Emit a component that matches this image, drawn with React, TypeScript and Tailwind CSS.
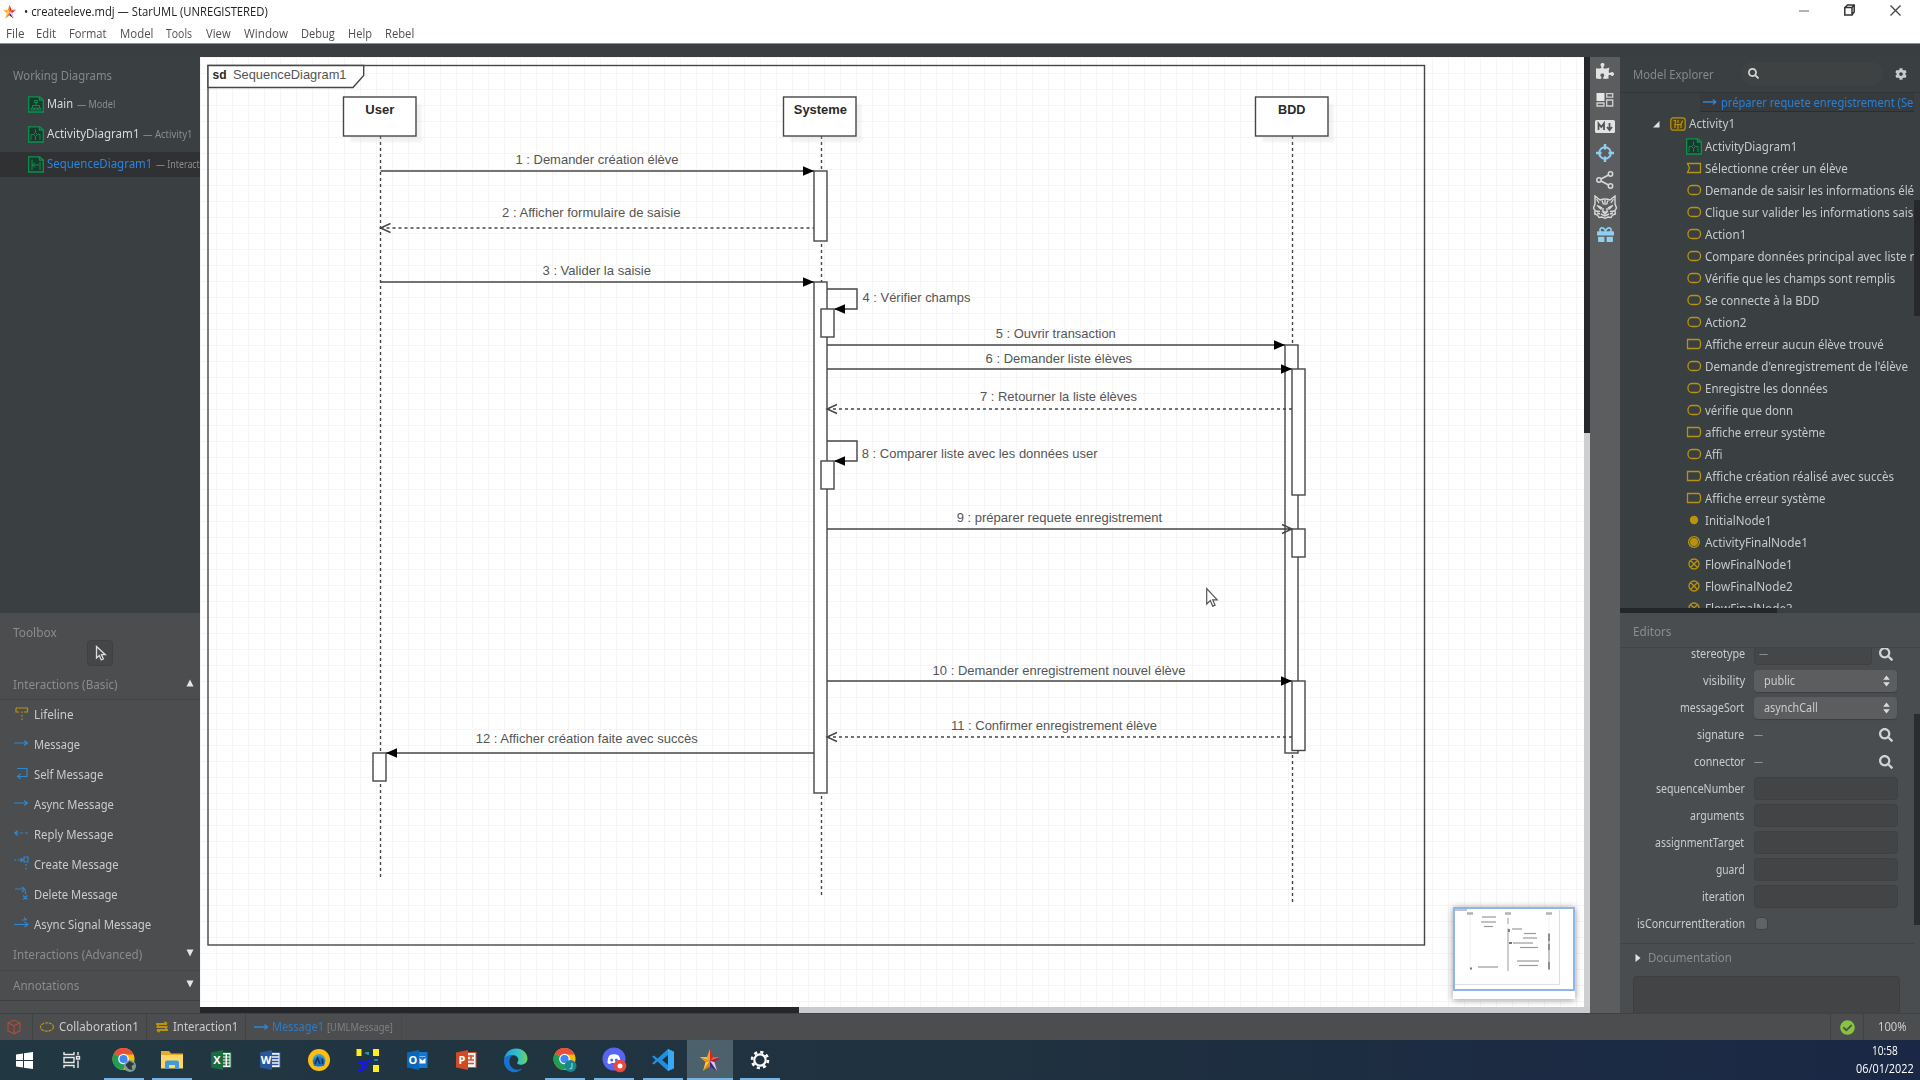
import { useLayoutEffect, useRef } from "react";
import type { ReactNode } from "react";
import { FaPuzzlePiece, FaGift, FaCog, FaSearch, FaCheckCircle } from "react-icons/fa";

/** Single-line label squeezed or stretched to a fixed width. */
function Fit({ w, children, className = "" }: { w: number; children: string; className?: string }) {
  const box = useRef<HTMLSpanElement>(null);
  const inner = useRef<HTMLSpanElement>(null);
  useLayoutEffect(() => {
    if (!box.current || !inner.current) return;
    box.current.style.width = `${w}px`;
    inner.current.style.transform = `scaleX(${w / inner.current.offsetWidth})`;
  }, [w, children]);
  return (
    <span ref={box} className={`inline-block shrink-0 whitespace-pre ${className}`}>
      <span ref={inner} className="inline-block origin-left whitespace-pre">
        {children}
      </span>
    </span>
  );
}

const GREEN = "#0d9150";
const GOLD = "#b8930f";
const BLUE = "#2f87cf";

function DocIcon({ kind }: { kind: number }) {
  return (
    <svg width="16" height="17" viewBox="0 0 16 17" fill="none" stroke={GREEN} strokeWidth="1.3" className="shrink-0">
      <path d="M.7.9h11L15.3 4v12H.7z" fill="#173a2d" />
      <path d="M11.5 1v3.2h3.6" />
      {kind === 0 && <path d="M8 6.500v3M4.500 12V9.500h7V12M3 12h3v2H3zM6.500 12h3v2h-3zM10 12h3v2h-3zM6.500 4.500h3v2h-3z" strokeWidth="0.9" />}
      {kind === 1 && <path d="M7.500 3.500v3M7.500 10.500v3.500M5.500 8.500l2-2 2 2-2 2zM3 14V8.500h2.500M9.500 8.500H12V14" strokeWidth="0.9" />}
      {kind === 2 && <path d="M4 3.500v10.500M12 6v8M4 9h7M7 6.500L4.500 9 7 11.500" strokeWidth="1" />}
    </svg>
  );
}

const MENUS: [string, number, number][] = [
  ["File", 6, 18.5],
  ["Edit", 11.8, 19.7],
  ["Format", 13.4, 37.1],
  ["Model", 13.1, 33.4],
  ["Tools", 13.5, 26.2],
  ["View", 13.8, 24.5],
  ["Window", 13, 43.8],
  ["Debug", 13, 34.2],
  ["Help", 13, 24],
  ["Rebel", 13.3, 29],
];

function StarLogo({ size }: { size: number }) {
  return (
    <svg width={size} height={size} viewBox="0 0 24 24" className="shrink-0">
      <path d="M12 1 9 9l3 4z" fill="#f2a51e" />
      <path d="M12 1l3.200 8L12 13z" fill="#d9261c" />
      <path d="M1.500 9 9 9l3 4z" fill="#fbc02d" />
      <path d="M22.500 9H15.200L12 13z" fill="#ee5a4a" />
      <path d="M1.500 9l6 5L12 13z" fill="#f7931e" />
      <path d="M22.500 9l-6 5L12 13z" fill="#b3163a" />
      <path d="M5 23l2.500-9L12 13z" fill="#ffc933" />
      <path d="M5 23l7-4.500V13z" fill="#e5841b" />
      <path d="M19 23l-7-4.500V13z" fill="#4a1f8f" />
      <path d="M19 23l-2.500-9L12 13z" fill="#d8c7ee" />
    </svg>
  );
}

function TitleBar() {
  return (
    <header className="flex h-[43px] shrink-0 flex-col bg-white font-['Open_Sans',sans-serif] text-[12px]">
      <div className="flex h-[23px] items-center pl-[2px] text-[#222]">
        <StarLogo size={15} />
        <Fit w={244} className="ml-[7px] mt-px">• createeleve.mdj — StarUML (UNREGISTERED)</Fit>
        <div className="ml-auto flex items-center gap-[35px] pb-[3px] pr-[19px]">
          <svg width="10" height="12" viewBox="0 0 10 12"><path d="M0 7h10" stroke="#aaa" strokeWidth="1.8" /></svg>
          <svg width="11" height="12" viewBox="0 0 11 12" fill="none" stroke="#333" strokeWidth="1.5"><path d="M.8 3.500h7.200V11H.8zM1.500 3L3.500 1h6.700v7l-2 2.500M8 3.500L10.200 1" /></svg>
          <svg width="11" height="12" viewBox="0 0 11 12"><path d="M.5 1.500l10 10M10.500 1.500l-10 10" stroke="#444" strokeWidth="1.3" /></svg>
        </div>
      </div>
      <nav className="flex h-5 items-center pt-px text-[#505050]">
        {MENUS.map(([label, gap, w]) => (
          <div key={label} className="flex items-center">
            <Gap n={gap} />
            <Fit w={w}>{label}</Fit>
          </div>
        ))}
      </nav>
    </header>
  );
}

function Gap({ n }: { n: number }) {
  return <span className="block shrink-0" style={{ width: n }} />;
}

function WorkingDiagrams() {
  const rows: [string, number, string, number][] = [
    ["Main", 26, "— Model", 38],
    ["ActivityDiagram1", 92.5, "— Activity1", 49.5],
    ["SequenceDiagram1", 105, "— Interact", 44],
  ];
  return (
    <section className="h-[556px] overflow-hidden bg-[#3a3f41]">
      <div className="h-8 pl-[13px] pt-[11px] leading-4 text-[#85898a]"><Fit w={99}>Working Diagrams</Fit></div>
      {rows.map(([name, w, owner, ow], i) => (
        <div key={name} className="flex h-[30px] items-center">
          <div className={`flex h-[25px] w-full items-center pl-7 ${i === 2 ? "bg-[#2f3133]" : ""}`}>
            <DocIcon kind={i} />
            <Fit w={w} className={`ml-[2.5px] ${i === 2 ? "text-[#2b85e0]" : "text-[#d8dada]"}`}>{name}</Fit>
            <Fit w={ow} className="ml-1 text-[11.5px] text-[#8a8e8f]">{owner}</Fit>
          </div>
        </div>
      ))}
    </section>
  );
}

const TOOL_ICONS: ReactNode[] = [
  <g stroke={GOLD} key="0"><path d="M2 2h11.500v4H10M2 2v4h3M8 5.500v1.500M8 9v1.500M8 12.500V14" /></g>,
  <path key="1" d="M0 7h13M10 4.500L13.500 7 10 9.500" />,
  <path key="2" d="M3 2.500h10v8H4M6.500 8L3.500 10.500 6.500 13" />,
  <path key="3" d="M0 7h13M10 4.500L13.500 7 10 9.500" />,
  <path key="4" d="M1 7h3.500M6 7h3M11 7h3M4 4.500L.8 7 4 9.500" />,
  <path key="5" d="M0 4h2M3.500 4h5M6.500 2L9 4 6.500 6M10 1h4v5h-4zM12 8v2M12 11.500v2" />,
  <path key="6" d="M1 3h9M8 1l3 2.500L8 6M11.500 5v3.500M9 9.500l4.500 4M13.500 9.500L9 13.500" />,
  <path key="7" d="M0 8.500h14M10.500 6L14 8.500 10.500 11M8 4h4M10 1.500L12.500 4" />,
];

const TOOLS: [string, number][] = [
  ["Lifeline", 40],
  ["Message", 46],
  ["Self Message", 69.5],
  ["Async Message", 80],
  ["Reply Message", 79.5],
  ["Create Message", 84.5],
  ["Delete Message", 84],
  ["Async Signal Message", 117],
];

function Toolbox() {
  return (
    <section className="flex-1 overflow-hidden bg-[#4b4d4f] text-[#8a8c8d]">
      <div className="h-[27px] pl-[13px] pt-[12px] leading-4"><Fit w={43.5}>Toolbox</Fit></div>
      <div className="ml-[87px] flex h-[26px] w-[26px] items-center justify-center rounded-sm border border-[#3f4041] bg-[#454647] pl-[2px]">
        <svg width="12" height="17" viewBox="0 0 12 17"><path d="M1.500 1.500v11.500l2.800-2.500 1.900 4.500 2.200-1-1.900-4.300h3.800z" fill="#4b4d4f" stroke="#dcdcdc" strokeWidth="1.3" /></svg>
      </div>
      <div className="flex h-[34px] items-center justify-between border-b border-[#404243] pl-[13px] pr-[6px] pt-1">
        <Fit w={104.5}>Interactions (Basic)</Fit>
        <svg width="8" height="8" viewBox="0 0 8 8" className="mb-1"><path d="M4 0.500l3.500 7h-7z" fill="#e6e6e6" /></svg>
      </div>
      {TOOLS.map(([name, w], i) => (
        <div key={name} className="flex h-[30px] items-center pl-[14px]">
          <svg width="15" height="15" viewBox="0 0 15 15" fill="none" stroke={BLUE} strokeWidth="1.2" className="mb-1 shrink-0">{TOOL_ICONS[i]}</svg>
          <Fit w={w} className="ml-[5px] text-[#c9cbcb]">{name}</Fit>
        </div>
      ))}
      <div className="flex h-[31px] items-center justify-between border-b border-[#444647] pl-[13px] pr-[6px]">
        <Fit w={129}>Interactions (Advanced)</Fit>
        <svg width="8" height="8" viewBox="0 0 8 8" className="mb-1"><path d="M4 7.500l3.500-7h-7z" fill="#e6e6e6" /></svg>
      </div>
      <div className="flex h-[30px] items-center justify-between border-b border-[#3d3f40] pl-[13px] pr-[6px]">
        <Fit w={66.5}>Annotations</Fit>
        <svg width="8" height="8" viewBox="0 0 8 8" className="mb-1"><path d="M4 7.500l3.500-7h-7z" fill="#e6e6e6" /></svg>
      </div>
    </section>
  );
}

/* label, left, width, baseline */
const LABELS: [string, number, number, number][] = [
  ["1 : Demander création élève", 515.5, 163, 164],
  ["2 : Afficher formulaire de saisie", 502, 178.5, 217],
  ["3 : Valider la saisie", 542.5, 108.5, 275],
  ["4 : Vérifier champs", 862.5, 108, 301.5],
  ["5 : Ouvrir transaction", 995.8, 120, 338.3],
  ["6 : Demander liste élèves", 985.6, 146.5, 362.5],
  ["7 : Retourner la liste élèves", 980, 157, 401.4],
  ["8 : Comparer liste avec les données user", 861.8, 235.7, 458.2],
  ["9 : préparer requete enregistrement", 956.7, 205.5, 522.4],
  ["10 : Demander enregistrement nouvel élève", 932.6, 253, 674.5],
  ["11 : Confirmer enregistrement élève", 951, 206, 729.7],
  ["12 : Afficher création faite avec succès", 475.7, 222, 742.5],
];

const HEADS: [string, number, number, number][] = [
  ["User", 343.5, 365.3, 29],
  ["Systeme", 783.5, 793.8, 53.2],
  ["BDD", 1255.5, 1278, 27.5],
];

const BARS: [number, number, number, number][] = [
  [814, 171, 13, 70],
  [814, 282, 13, 511],
  [821, 309, 13, 28],
  [821, 461, 13, 28],
  [1285, 345, 13, 408],
  [1292, 369, 13, 126],
  [1292, 529, 13, 28],
  [1292, 681, 13, 69.5],
  [373, 753, 13, 28],
];

const SOLID: [number, number, number][] = [
  [380.5, 814, 171],
  [380.5, 814, 282],
  [827, 1285, 345],
  [827, 1292, 369],
  [827, 1292, 681],
  [814, 386, 753],
];

const DASHED: [number, number, number][] = [
  [814, 380.5, 228],
  [1292, 827, 409],
  [1292, 827, 737],
];

function Diagram() {
  return (
    <svg width="1384" height="950" viewBox="200 57 1384 950" className="block bg-white">
      <defs>
        <pattern id="grid" x="8" y="9" width="16" height="16" patternUnits="userSpaceOnUse">
          <path d="M.5 0v16M0 .5h16" stroke="#f5f5f6" strokeWidth="1" />
        </pattern>
        <filter id="soft"><feGaussianBlur stdDeviation="1" /></filter>
      </defs>
      <rect x="200" y="57" width="1384" height="950" fill="url(#grid)" />
      <g fill="none" stroke="#464646" strokeWidth="1.4">
        <rect x="208" y="65.5" width="1216.500" height="879.5" />
        <path d="M208 87.500H353l10.700-12V65.500H208z" fill="#fff" />
        <path d="M380.500 136V753M380.500 784V878M821.500 136V171M821.500 244V282M821.500 796V896M1292.500 136V345M1292.500 755V902" strokeDasharray="3 3" />
        {HEADS.map(([n, x]) => (
          <g key={n}>
            <rect x={x + 7} y="104" width="71" height="38" fill="#c8c8cc" opacity="0.22" stroke="none" filter="url(#soft)" />
            <rect x={x} y="97" width="72.5" height="39" fill="#fff" />
          </g>
        ))}
        {BARS.map(([x, y, w, h]) => <rect key={`${x}-${y}`} x={x} y={y} width={w} height={h} fill="#fff" />)}
        {SOLID.map(([a, b, y]) => {
          const s = b > a ? -1 : 1;
          return (
            <g key={y}>
              <path d={`M${a} ${y}H${b}`} />
              <path d={`M${b} ${y}l${11 * s} -4.700v9.400z`} fill="#000" stroke="none" />
            </g>
          );
        })}
        {DASHED.map(([a, b, y]) => (
          <g key={y}>
            <path d={`M${b} ${y}H${a}`} strokeDasharray="3 3" />
            <path d={`M${b + 10} ${y - 4.5}L${b} ${y}l10 4.500`} />
          </g>
        ))}
        <path d="M827 529H1292M1282 524.500l10 4.500-10 4.500" />
        {[289, 441].map((y) => (
          <g key={y}>
            <path d={`M827 ${y}H857V${y + 20}H835`} />
            <path d={`M834 ${y + 20}l11 -4.700v9.400z`} fill="#000" stroke="none" />
          </g>
        ))}
      </g>
      <g fontFamily="'Liberation Sans', sans-serif" fontSize="13" fill="#555">
        {LABELS.map(([t, x, w, y]) => (
          <text key={t} x={x} y={y} textLength={w} lengthAdjust="spacingAndGlyphs">{t}</text>
        ))}
        <text x="233" y="79" textLength="113.5" lengthAdjust="spacingAndGlyphs">SequenceDiagram1</text>
        <g fontWeight="700" fill="#2a2a2a">
          <text x="212.6" y="79" textLength="14" lengthAdjust="spacingAndGlyphs">sd</text>
          {HEADS.map(([t, , x, w]) => (
            <text key={t} x={x} y="113.8" textLength={w} lengthAdjust="spacingAndGlyphs">{t}</text>
          ))}
        </g>
      </g>
      <path d="M1206.700 588.500v15.500l3.600-3.400 2.400 5.500 2.400-1-2.400-5.300h4.500z" fill="#fff" stroke="#555" strokeWidth="1.2" />
    </svg>
  );
}

function Minimap() {
  const marks: [number, number, number][] = [
    [27, 8, 14], [26, 13, 15], [29, 17.5, 9], [57, 20, 10], [69, 24.5, 12],
    [68, 29, 14], [58, 34, 20], [65, 38.5, 18], [62, 52, 22], [64, 56.5, 19], [23, 58, 20],
  ];
  return (
    <div className="absolute left-[1253px] top-[850px] h-[92px] w-[122px] bg-white shadow-[0_1px_7px_rgba(0,0,0,0.4)]">
      <div className="h-[84px] border-2 border-[#8fb5ef]">
        <svg width="118" height="80" viewBox="0 0 118 80" fill="none">
          <path d="M0 75.500H104.500V1" stroke="#ddd" />
          <path d="M0 1H12" stroke="#888" />
          <path d="M15 6V62M53 6V62M94 6V62" stroke="#f0f0f0" />
          <path d="M53 9V15M53 19.500V62" stroke="#bbb" strokeWidth="1.4" />
          <path d="M94 24V61" stroke="#b4b4b4" strokeWidth="1.5" />
          <path d="M94 25V32M94 35V41M94 53V60" stroke="#888" strokeWidth="1.8" />
          <path d="M12 4.500h6M50 4.500h6M91 4.500h6" stroke="#b5b0b5" strokeWidth="2.5" />
          <path d="M54 20v3M54 34h3M15 59.500h2" stroke="#777" strokeWidth="1.8" />
          {marks.map(([x, y, w]) => <path key={y} d={`M${x} ${y}h${w}`} stroke="#9a9a9a" strokeWidth="1.2" />)}
        </svg>
      </div>
    </div>
  );
}

function Canvas() {
  return (
    <main className="relative grid grid-cols-[1384px_6px] grid-rows-[950px_6px]">
      <Diagram />
      <div className="bg-[#cfcfd2]"><div className="h-[376px] bg-[#242629]" /></div>
      <div className="col-span-2 bg-[#cbcbcf]"><div className="h-full w-[599px] bg-[#242629]" /></div>
      <Minimap />
    </main>
  );
}

function SideToolbar() {
  return (
    <aside className="flex w-[30px] shrink-0 flex-col items-center bg-[#5c5d5f] pt-[5px] text-[#e2e2e2]">
      <div className="flex h-[18px] items-center"><FaPuzzlePiece size={18} /></div>
      <svg width="18" height="14" viewBox="0 0 18 14" className="mt-[13px]" fill="none" stroke="#d0d0d0" strokeWidth="1.3">
        <path d="M.5 0h8v8h-8z" fill="#e6e6e6" stroke="none" />
        <path d="M10.700 .7h6v3.500h-6zM10.700 7h6v6h-6zM1 10h7v3H1z" />
      </svg>
      <svg width="20" height="13" viewBox="0 0 20 13" className="mt-[13px]">
        <rect width="20" height="13" rx="1.5" fill="#e2e2e2" />
        <path d="M3.500 10V3.500L6.300 7 9 3.500V10M14.500 3v6.500M12 7l2.500 3L17 7" fill="none" stroke="#555" strokeWidth="1.8" />
      </svg>
      <svg width="18" height="18" viewBox="0 0 18 18" className="mt-[11px]" fill="none" stroke="#8fd0f2" strokeWidth="2">
        <circle cx="9" cy="9" r="5.8" />
        <path d="M9 0v5.500M9 12.500V18M0 9h5.500M12.500 9H18" strokeWidth="2.4" />
      </svg>
      <svg width="18" height="18" viewBox="0 0 18 18" className="mt-[9px]" fill="none" stroke="#d8d8d8" strokeWidth="1.5">
        <circle cx="3" cy="9" r="2.2" /><circle cx="14.5" cy="3" r="2.2" /><circle cx="14.5" cy="15" r="2.2" />
        <path d="M5 8l7.500-4M5 10l7.500 4" />
      </svg>
      <svg width="24" height="24" viewBox="0 0 24 24" className="mt-[6px]" fill="none" stroke="#d8d8d8" strokeWidth="1.4">
        <path d="M2 1l5 4c3-1.200 7-1.200 10 0l5-4v8l1.500 4-1.500 2.500.3 3.500-2.800 1-1.500 2.500-3-.5L12 23.300l-3-1.300-3 .5L4.500 20l-2.800-1 .3-3.500L.5 13 2 9z" />
        <path d="M3.500 4l2.500 4M20.500 4L18 8M9 5.500l1.500 4M15 5.500l-1.500 4M12 5v5M4 10.500l5 2.500M20 10.500L15 13M5.500 12l3 2.500M18.500 12l-3 2.500M10 17h4l-2 2zM10 13v4M14 13v4M2 16l5 .5M22 16l-5 .5M8 19l4 2 4-2M4 18l3 1M20 18l-3 1" />
      </svg>
      <div className="mt-[7px] text-[#8fd0f2]"><FaGift size={17} /></div>
    </aside>
  );
}

type NodeKind = "action" | "accept" | "send" | "initial" | "final" | "flow" | "diagram";

const TREE: [NodeKind, string, number][] = [
  ["diagram", "ActivityDiagram1", 92.3],
  ["accept", "Sélectionne créer un élève", 143],
  ["action", "Demande de saisir les informations élé", 209],
  ["action", "Clique sur valider les informations sais", 208.5],
  ["action", "Action1", 41],
  ["action", "Compare données principal avec liste r", 209],
  ["action", "Vérifie que les champs sont remplis", 190.7],
  ["action", "Se connecte à la BDD", 114.3],
  ["action", "Action2", 41],
  ["send", "Affiche erreur aucun élève trouvé", 179],
  ["action", "Demande d'enregistrement de l'élève", 203.3],
  ["action", "Enregistre les données", 122.5],
  ["action", "vérifie que donn", 88],
  ["send", "affiche erreur système", 120.7],
  ["action", "Affi", 17.5],
  ["send", "Affiche création réalisé avec succès", 189],
  ["send", "Affiche erreur système", 121],
  ["initial", "InitialNode1", 66.5],
  ["final", "ActivityFinalNode1", 102.5],
  ["flow", "FlowFinalNode1", 88],
  ["flow", "FlowFinalNode2", 88],
  ["flow", "FlowFinalNode3", 88],
];

function NodeIcon({ kind }: { kind: NodeKind }) {
  if (kind === "diagram") return <DocIcon kind={1} />;
  return (
    <svg width="16" height="14" viewBox="0 0 16 14" fill="none" stroke={GOLD} strokeWidth="1.3" className="shrink-0">
      {kind === "action" && <rect x="2" y="2.5" width="12.500" height="9" rx="4" />}
      {kind === "accept" && <path d="M1.500 2.500h13v9h-13L3.500 7z" />}
      {kind === "send" && <path d="M1.500 2.500h11.500L14.500 5v4L13 11.500H1.500z" />}
      {kind === "initial" && <circle cx="8" cy="7" r="4.2" fill={GOLD} stroke="none" />}
      {kind === "final" && <g><circle cx="8" cy="7" r="5.400" /><circle cx="8" cy="7" r="3.3" fill={GOLD} /></g>}
      {kind === "flow" && <path d="M13 7a5 5 0 1 1-10 0 5 5 0 0 1 10 0zM4.800 3.800l6.400 6.400M11.200 3.800L4.800 10.200" />}
    </svg>
  );
}

function Explorer() {
  return (
    <section className="flex h-[556px] flex-col overflow-hidden bg-[#3a3f41] text-[#c6c9ca]">
      <div className="flex h-9 shrink-0 items-center border-b border-[#323638] pl-[13px] text-[#85898a]">
        <Fit w={81}>Model Explorer</Fit>
        <div className="mb-[3px] ml-[27px] flex h-[23px] w-[142px] items-center rounded-full bg-[#3e4243] pl-[7px] text-[#d4d6d6]"><FaSearch size={11} /></div>
        <div className="mb-[2px] ml-[12px] text-[#c9cbcb]"><FaCog size={12} /></div>
      </div>
      <div className="flex h-[515px] overflow-hidden">
        <div className="w-[294px] overflow-hidden">
          <div className="-mt-[2px] ml-20 flex h-[22px] items-center">
            <div className="flex h-[20px] w-full items-center border-y border-[#2c2f31] bg-[#373b3d] pl-[3px]">
              <svg width="14" height="10" viewBox="0 0 14 10" fill="none" stroke={BLUE} strokeWidth="1.3"><path d="M0 5h12.500M10 2.500L12.800 5 10 7.500" /></svg>
              <Fit w={192} className="ml-1 mt-px text-[#2b80d6]">préparer requete enregistrement (Se</Fit>
            </div>
          </div>
          <div className="flex h-[22px] items-center pl-[33px]">
            <svg width="7" height="7" viewBox="0 0 7 7"><path d="M6.500 0v6.500H0z" fill="#e2e2e2" /></svg>
            <svg width="16" height="14" viewBox="0 0 16 14" fill="#4d431c" stroke={GOLD} strokeWidth="1.2" className="ml-[10px]">
              <rect x=".8" y=".8" width="14.400" height="12.400" rx="2.500" /><path d="M8 3v3M5 11V7.500h6V11M3.500 3.500h2L5 7.500M12.500 3.500L11 7.500M8 8v4" fill="none" />
            </svg>
            <Fit w={45.7} className="ml-[2.5px]">Activity1</Fit>
          </div>
          {TREE.map(([kind, name, w], i) => (
            <div key={i} className="flex h-[22px] items-center pl-[66px]">
              <NodeIcon kind={kind} />
              <Fit w={w} className="ml-[3px] mt-px">{name}</Fit>
            </div>
          ))}
        </div>
        <div className="mt-[107px] h-[116px] w-[6px] bg-[#262829]" />
      </div>
      <div className="h-[5px] w-[157px] bg-[#242628]" />
    </section>
  );
}

type Field = "combo" | "select" | "pick" | "input" | "check";

const FIELDS: [string, number, Field, string, number][] = [
  ["stereotype", 54, "combo", "—", 9],
  ["visibility", 42, "select", "public", 31],
  ["messageSort", 64.5, "select", "asynchCall", 54],
  ["signature", 47.5, "pick", "—", 9],
  ["connector", 51, "pick", "—", 9],
  ["sequenceNumber", 89, "input", "", 0],
  ["arguments", 54.5, "input", "", 0],
  ["assignmentTarget", 89.5, "input", "", 0],
  ["guard", 29, "input", "", 0],
  ["iteration", 43, "input", "", 0],
  ["isConcurrentIteration", 108, "check", "", 0],
];

function FieldBody({ kind, value, w }: { kind: Field; value: string; w: number }) {
  if (kind === "select")
    return (
      <div className="flex h-[22px] w-[143px] items-center justify-between rounded-sm bg-[#5b5d5f] pl-[10px] pr-[7px] text-[#ccc] shadow-[0_1px_1px_#3c3e40]">
        <Fit w={w}>{value}</Fit>
        <svg width="7" height="12" viewBox="0 0 7 12" fill="#dcdcdc"><path d="M3.500 .5l3.300 4.300H.2zM3.500 11.500L.2 7.200h6.600z" /></svg>
      </div>
    );
  if (kind === "input") return <div className="h-[23px] w-[144px] rounded-sm border border-[#3e4041] bg-[#424446]" />;
  if (kind === "check") return <div className="ml-px size-[13px] rounded-sm border border-[#3f4142] bg-[#606264]" />;
  return (
    <div className="flex w-[142px] items-center justify-between pr-[3px]">
      <div className={kind === "combo" ? "flex h-[23px] w-[118px] items-center rounded-sm border border-[#3e4041] bg-[#444648] pl-1 text-[#8a8c8d]" : "text-[#8f9192]"}>
        <Fit w={w}>{value}</Fit>
      </div>
      <span className="text-[#d2d4d4]"><FaSearch size={14} /></span>
    </div>
  );
}

function Editors() {
  return (
    <section className="flex h-[400px] flex-col overflow-hidden bg-[#4a4d4f] text-[#8a8c8d]">
      <div className="flex h-[35px] shrink-0 items-center border-b border-[#424547] pl-[13px] pt-[4px]"><Fit w={38}>Editors</Fit></div>
      <div className="flex min-h-0 flex-1 overflow-hidden">
        <div className="w-[294px]">
          <div className="-mt-[8px]">
            {FIELDS.map(([name, w, kind, value, vw]) => (
              <div key={name} className="flex h-[27px] items-center">
                <div className="flex w-[124.500px] justify-end text-[#c9cbcb]"><Fit w={w}>{name}</Fit></div>
                <div className="ml-[9px]"><FieldBody kind={kind} value={value} w={vw} /></div>
              </div>
            ))}
          </div>
          <div className="mt-[6px] flex h-[28px] items-center border-t border-[#404344] pl-[15px]">
            <svg width="6" height="8" viewBox="0 0 6 8"><path d="M.5 0L5.500 4 .5 8z" fill="#e2e2e2" /></svg>
            <Fit w={84} className="ml-[7px]">Documentation</Fit>
          </div>
          <div className="ml-[13px] mt-[5px] h-[60px] w-[267px] rounded-sm border border-[#3c3e3f] bg-[#424446]" />
        </div>
        <div className="mt-[66px] h-[211px] w-[6px] bg-[#2a2c2f]" />
      </div>
    </section>
  );
}

function StatusBar() {
  return (
    <div className="flex h-[27px] shrink-0 items-center border-t border-[#3f4143] bg-[#4c4d4f] text-[12px] text-[#c9cbcb]">
      <div className="flex h-full w-[33px] items-center border-r border-[#414244] pl-[6px]">
        <svg width="16" height="16" viewBox="0 0 16 16" fill="none" stroke="#b04a36" strokeWidth="1.2"><path d="M8 1.200l6 2.600v8L8 14.800l-6-3v-8zM2 3.800l6 3 6-3M8 6.800v8" /></svg>
      </div>
      <div className="flex h-full w-[113.500px] items-center border-r border-[#414244] pl-[6px]">
        <svg width="16" height="14" viewBox="0 0 16 14"><ellipse cx="8" cy="7" rx="6.5" ry="4.2" fill="none" stroke={GOLD} strokeWidth="1.2" strokeDasharray="3 .8" /></svg>
        <Fit w={80} className="ml-[3.5px]">Collaboration1</Fit>
      </div>
      <div className="flex h-full w-[99px] items-center border-r border-[#414244] pl-[8px]">
        <svg width="14" height="12" viewBox="0 0 14 12" fill="none" stroke={GOLD} strokeWidth="1.9"><path d="M1 3h11M9.500 1L12 3M1.500 6h11M13 9H2M4.500 11L2 9M3 3v3M11 6v3" /></svg>
        <Fit w={65.5} className="ml-1">Interaction1</Fit>
      </div>
      <div className="flex h-full items-center border-r border-[#464749] pl-[8px] pr-2">
        <svg width="15" height="10" viewBox="0 0 15 10" fill="none" stroke={BLUE} strokeWidth="1.3"><path d="M0 5h13M10.500 2.500L13.500 5 10.500 7.500" /></svg>
        <Fit w={52} className="ml-[3px] text-[#2a7cc8]">Message1</Fit>
        <Fit w={66} className="ml-[3px] text-[11px] text-[#7f8182]">[UMLMessage]</Fit>
      </div>
      <div className="ml-auto flex h-full w-[34px] items-center justify-center border-x border-[#414244] text-[#86c440]"><FaCheckCircle size={15} /></div>
      <div className="flex w-[56px] items-center pl-[14px]"><Fit w={29}>100%</Fit></div>
    </div>
  );
}

function OfficeIcon({ color, dark, letter, kind }: { color: string; dark: string; letter: string; kind: number }) {
  return (
    <svg width="22" height="22" viewBox="0 0 22 22">
      <rect x="11" y="3.500" width="10" height="15" fill={kind === 3 ? color : "#f4f4f4"} stroke={color} />
      {kind === 0 && <path d="M13 6.500h2.500M17 6.500h2.500M13 9.500h2.500M17 9.500h2.500M13 12.500h2.500M17 12.500h2.500M13 15.500h2.500M17 15.500h2.500" stroke={color} strokeWidth="1.8" />}
      {kind === 1 && <path d="M13 6.500h6.500M13 9.500h6.500M13 12.500h6.500M13 15.500h6.500" stroke={color} strokeWidth="1.4" />}
      {kind === 2 && <path d="M13 7h6M13 11h6M13 14.500h6M16 6v5" stroke={color} strokeWidth="1.6" />}
      {kind === 3 && <path d="M13 7h7v8h-7zM13 8l3.500 3L20 8" fill="#fff" stroke={color} />}
      <path d="M1 3.500L13 1v20L1 18.500z" fill={dark} />
      <text x="7" y="15" textAnchor="middle" fontSize="11" fontWeight="700" fill="#fff" fontFamily="'Open Sans', sans-serif">{letter}</text>
    </svg>
  );
}

function Chrome({ badge }: { badge: ReactNode }) {
  return (
    <svg width="26" height="26" viewBox="0 0 26 26">
      <circle cx="12.5" cy="12" r="11" fill="#fbbc05" />
      <path d="M12.500 12L3 6.500A11 11 0 0 1 22.500 7.500H12.500z" fill="#ea4d3d" />
      <path d="M12.500 12L3 6.500A11 11 0 0 0 12 23l4.500-8z" fill="#1f9d55" />
      <circle cx="12.5" cy="12" r="5.3" fill="#fff" />
      <circle cx="12.5" cy="12" r="4.1" fill="#4285f4" />
      {badge}
    </svg>
  );
}

function Taskbar() {
  const items: { w: number; line?: boolean; active?: boolean; icon: ReactNode }[] = [
    { w: 48, icon: <svg width="17" height="17" viewBox="0 0 17 17" fill="#fff"><path d="M0 2.500L7 1.500V8H0zM8 1.300L17 0v8H8zM0 9h7v6.500L0 14.500zM8 9h9v8L8 15.700z" /></svg> },
    { w: 48, icon: <svg width="18" height="16" viewBox="0 0 18 16" fill="none" stroke="#e8e8e8" strokeWidth="1.4"><path d="M1 0v2.500h10V0M1 5.500h10v5H1zM1 16v-2.500h10V16M15 0v3M15 8.500V16M13.500 4.500h3v2.500h-3z" /></svg> },
    { w: 55, line: true, icon: <Chrome badge={<g><circle cx="19" cy="19" r="6" fill="#7d9a95" /><path d="M14.500 18l4-4 5 3-3 2 1 4-4-1z" fill="#2b3a3c" /></g>} /> },
    { w: 42, line: true, icon: <svg width="24" height="20" viewBox="0 0 24 20"><path d="M1 1h8l2 2.500h12V18H1z" fill="#e9a92c" /><path d="M1 5h22v13.500H1z" fill="#ffd768" /><path d="M5 19v-6.500q0-2 2-2h10q2 0 2 2V19h-4v-4H9v4z" fill="#3f9bdc" /></svg> },
    { w: 55, icon: <OfficeIcon color="#217346" dark="#1d6b41" letter="X" kind={0} /> },
    { w: 44, icon: <OfficeIcon color="#2b579a" dark="#2b579a" letter="W" kind={1} /> },
    { w: 54, icon: <svg width="24" height="24" viewBox="0 0 24 24"><circle cx="12" cy="12" r="11" fill="#fdbd12" /><circle cx="12" cy="12.5" r="6.5" fill="#3f9fc4" /><path d="M6 13q6-9 12 0l-1 5H7z" fill="#1f6fc0" /><path d="M8 16l2.500-6L13 16M15.500 10.500V16" stroke="#12305c" strokeWidth="1.5" fill="none" /></svg> },
    { w: 44, icon: <svg width="24" height="24" viewBox="0 0 24 24"><path d="M.5 1h5v7h-5zM17 1h6v7h-6zM17 17h6v7h-6z" fill="#ffee1c" /><path d="M1 22h5l6-6M2 15h8l5-4M7 15v6" stroke="#1616ee" strokeWidth="2.2" fill="none" /><path d="M9 5h4M12 4v3M18 12h4" stroke="#18a6b8" strokeWidth="1.5" /></svg> },
    { w: 54, icon: <OfficeIcon color="#1279cf" dark="#0a66b8" letter="O" kind={3} /> },
    { w: 43, icon: <OfficeIcon color="#d35230" dark="#d04a26" letter="P" kind={2} /> },
    { w: 56, icon: <svg width="25" height="25" viewBox="0 0 24 24"><defs><linearGradient id="edge" x1="0" x2="1"><stop offset="0" stopColor="#1b9de2" /><stop offset=".6" stopColor="#35c1c8" /><stop offset="1" stopColor="#6fd35a" /></linearGradient></defs><path d="M1 11C2 4 7 .5 12.500.5 19 .5 23.500 5 23.500 10c0 4-3 6-6.500 6-3 0-4-1.200-3-2.500 2-3-.5-6.500-4.500-6.500C5 7 2 9 1 11z" fill="url(#edge)" /><path d="M1 11c1.500-3 5-4.500 8.500-4-3 1.500-4 5-3 8.500 1.500 4.500 6.500 6.500 12 4.500C15 24 9 24.500 5 21 1.500 18 .5 14.500 1 11z" fill="#1673d1" /></svg> },
    { w: 44, line: true, icon: <Chrome badge={<g><circle cx="18.5" cy="19" r="6" fill="#16868f" /><path d="M20 16v4q0 2-2.500 1.500" stroke="#8fd0d4" fill="none" strokeWidth="1.2" /></g>} /> },
    { w: 53, line: true, icon: <svg width="26" height="26" viewBox="0 0 26 26"><circle cx="13" cy="12" r="11.5" fill="#5865f2" /><path d="M6.500 16q0-6 2.500-8 4-1.500 8 0 2.500 2 2.500 8-2.500 2-3.500 0h-6q-1 2-3.500 0z" fill="#fff" /><circle cx="10.7" cy="13" r="1.5" fill="#5865f2" /><circle cx="15.3" cy="13" r="1.5" fill="#5865f2" /><circle cx="19" cy="19" r="6.3" fill="#e8483f" /><circle cx="19" cy="19" r="2.5" fill="#fff" /></svg> },
    { w: 45, line: true, icon: <svg width="24" height="24" viewBox="0 0 24 24"><path d="M17 1l6 2.800v16.400L17 23 6.500 13.500 3 16.500 1 15.500 4.500 12 1 8.500l2-1 3.500 3zM17 7l-6 5 6 5z" fill="#1f8fe0" fillRule="evenodd" /><path d="M17 1l6 2.800v16.400L17 23z" fill="#3aa9f5" /></svg> },
    { w: 50, line: true, active: true, icon: <StarLogo size={24} /> },
    { w: 50, line: true, icon: <svg width="20" height="20" viewBox="0 0 20 20" fill="none" stroke="#fff"><circle cx="10" cy="10" r="5.7" strokeWidth="2.200" /><circle cx="10" cy="10" r="8" strokeWidth="2.600" strokeDasharray="3.140 3.143" /></svg> },
  ];
  return (
    <footer className="flex h-10 shrink-0 bg-gradient-to-r from-[#213842] via-[#20313f] to-[#1a2745]">
      {items.map(({ w, line, active, icon }, i) => (
        <div key={i} className="flex h-full shrink-0 flex-col items-center" style={{ width: w }}>
          <div className={`flex flex-1 items-center justify-center pt-[2px] ${active ? "w-[46px] bg-[#4b616b]" : "w-11"}`}>{icon}</div>
          <div className={`h-[2px] ${active ? "w-[46px]" : "w-10"} ${line ? "bg-[#76b4e6]" : ""}`} />
        </div>
      ))}
      <div className="ml-auto flex w-[70px] flex-col items-center pt-[2px] font-['Open_Sans',sans-serif] text-[12px] leading-[18px] text-white">
        <Fit w={26}>10:58</Fit>
        <Fit w={58}>06/01/2022</Fit>
      </div>
    </footer>
  );
}

export default function App() {
  return (
    <div className="flex h-[1080px] w-[1920px] flex-col overflow-hidden bg-[#3a3f41] font-['Noto_Sans',sans-serif] text-[12px] leading-4">
      <TitleBar />
      <div className="h-[14px] shrink-0 border-t border-[#8d9091] bg-[#3a3e40]" />
      <div className="flex h-[956px] shrink-0">
        <aside className="flex w-[200px] shrink-0 flex-col">
          <WorkingDiagrams />
          <Toolbox />
        </aside>
        <Canvas />
        <SideToolbar />
        <aside className="w-[300px] shrink-0">
          <Explorer />
          <Editors />
        </aside>
      </div>
      <StatusBar />
      <Taskbar />
    </div>
  );
}
